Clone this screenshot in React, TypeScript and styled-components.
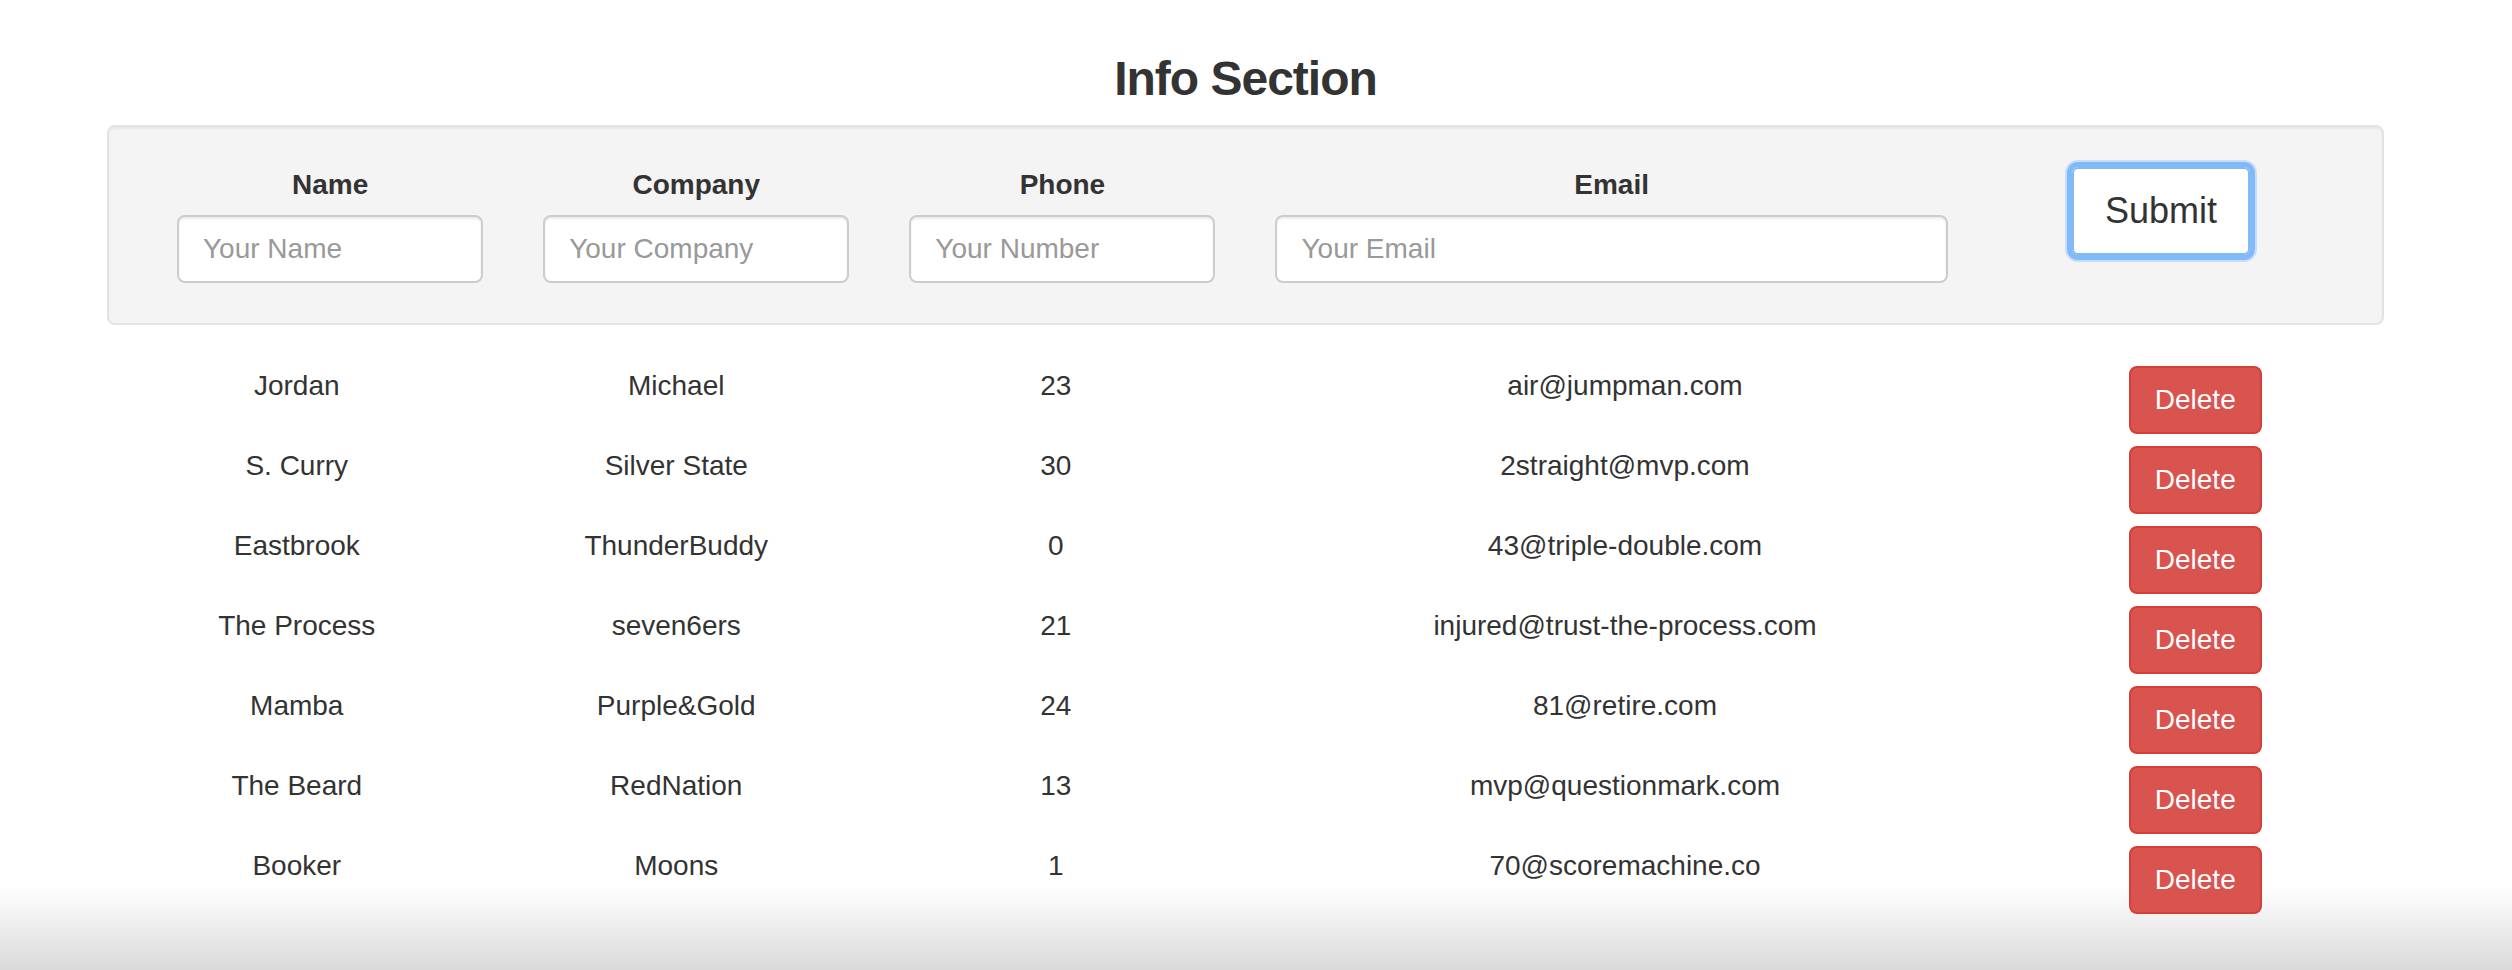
import React from "react";
import styled, { createGlobalStyle } from "styled-components";

const GlobalStyle = createGlobalStyle`
  html, body {
    margin: 0;
    padding: 0;
  }
  body {
    min-height: 100vh;
    font-family: "Liberation Sans", Arial, Helvetica, sans-serif;
    font-size: 28px;
    line-height: 40px;
    color: #333;
    background: linear-gradient(to bottom, #ffffff 0px, #ffffff 885px, #dadada 970px);
    background-repeat: no-repeat;
  }
  * { box-sizing: border-box; }
`;

const Page = styled.div`
  padding-top: 53px;
`;

const Container = styled.div`
  width: 2277px;
  margin-left: 107px;
`;

const Title = styled.h3`
  margin: 0 0 19px;
  font-size: 48px;
  line-height: 52.8px;
  font-weight: 700;
  letter-spacing: -1px;
  text-align: center;
  color: #333;
`;

const Well = styled.form`
  display: grid;
  grid-template-columns: 1fr 1fr 1fr 2fr 1fr;
  padding: 38px 38px 40px;
  background: #f4f4f4;
  border: 2px solid #e3e3e3;
  border-radius: 8px;
  box-shadow: inset 0 2px 2px rgba(0, 0, 0, 0.05);
`;

const FieldGroup = styled.div`
  display: flex;
  flex-direction: column;
  align-items: stretch;
  padding: 0 30px;
`;

const Label = styled.label`
  display: block;
  text-align: center;
  font-weight: 700;
  font-size: 28px;
  line-height: 40px;
  margin-bottom: 10px;
`;

const Input = styled.input`
  display: block;
  width: 100%;
  height: 68px;
  padding: 12px 24px;
  font-family: inherit;
  font-size: 28px;
  line-height: 40px;
  color: #555;
  background: #fff;
  border: 2px solid #ccc;
  border-radius: 8px;
  box-shadow: inset 0 2px 2px rgba(0, 0, 0, 0.075);
  outline: none;
  &::placeholder {
    color: #999;
  }
`;

const SubmitCell = styled.div`
  display: flex;
  justify-content: center;
  align-items: flex-start;
`;

const SubmitButton = styled.button`
  width: 182px;
  height: 92px;
  padding: 0;
  font-family: inherit;
  font-size: 36px;
  line-height: 48px;
  color: #333;
  background: #fff;
  border: 2px solid #82b9f7;
  border-radius: 8px;
  box-shadow: inset 0 0 0 2px #82b9f7, 0 0 0 3px #82b9f7, 0 0 0 5px #c6def9;
  outline: none;
  cursor: pointer;
`;

const Rows = styled.div`
  display: grid;
  grid-template-columns: 1fr 1fr 1fr 2fr 1fr;
  row-gap: 12px;
  margin-top: 41px;
  align-items: start;
`;

const Cell = styled.div`
  text-align: center;
  font-size: 28px;
  line-height: 40px;
  white-space: nowrap;
`;

const ActionCell = styled.div`
  display: flex;
  justify-content: center;
  padding-left: 2px;
`;

const DeleteButton = styled.button`
  height: 68px;
  padding: 12px 24px;
  font-family: inherit;
  font-size: 28px;
  line-height: 40px;
  color: #fff;
  background: #d9534f;
  border: 2px solid #d43f3a;
  border-radius: 8px;
  cursor: pointer;
`;

type Person = { name: string; company: string; phone: string; email: string };

const people: Person[] = [
  { name: "Jordan", company: "Michael", phone: "23", email: "air@jumpman.com" },
  { name: "S. Curry", company: "Silver State", phone: "30", email: "2straight@mvp.com" },
  { name: "Eastbrook", company: "ThunderBuddy", phone: "0", email: "43@triple-double.com" },
  { name: "The Process", company: "seven6ers", phone: "21", email: "injured@trust-the-process.com" },
  { name: "Mamba", company: "Purple&Gold", phone: "24", email: "81@retire.com" },
  { name: "The Beard", company: "RedNation", phone: "13", email: "mvp@questionmark.com" },
  { name: "Booker", company: "Moons", phone: "1", email: "70@scoremachine.co" },
];

const fields = [
  { label: "Name", placeholder: "Your Name", type: "text" },
  { label: "Company", placeholder: "Your Company", type: "text" },
  { label: "Phone", placeholder: "Your Number", type: "text" },
  { label: "Email", placeholder: "Your Email", type: "email" },
];

export default function App() {
  return (
    <>
      <GlobalStyle />
      <Page>
        <Container>
          <Title>Info Section</Title>
          <Well onSubmit={(e) => e.preventDefault()}>
            {fields.map((f) => (
              <FieldGroup key={f.label}>
                <Label>{f.label}</Label>
                <Input type={f.type} placeholder={f.placeholder} />
              </FieldGroup>
            ))}
            <SubmitCell>
              <SubmitButton type="submit">Submit</SubmitButton>
            </SubmitCell>
          </Well>
          <Rows>
            {people.map((p) => (
              <React.Fragment key={p.email}>
                <Cell>{p.name}</Cell>
                <Cell>{p.company}</Cell>
                <Cell>{p.phone}</Cell>
                <Cell>{p.email}</Cell>
                <ActionCell>
                  <DeleteButton type="button">Delete</DeleteButton>
                </ActionCell>
              </React.Fragment>
            ))}
          </Rows>
        </Container>
      </Page>
    </>
  );
}
